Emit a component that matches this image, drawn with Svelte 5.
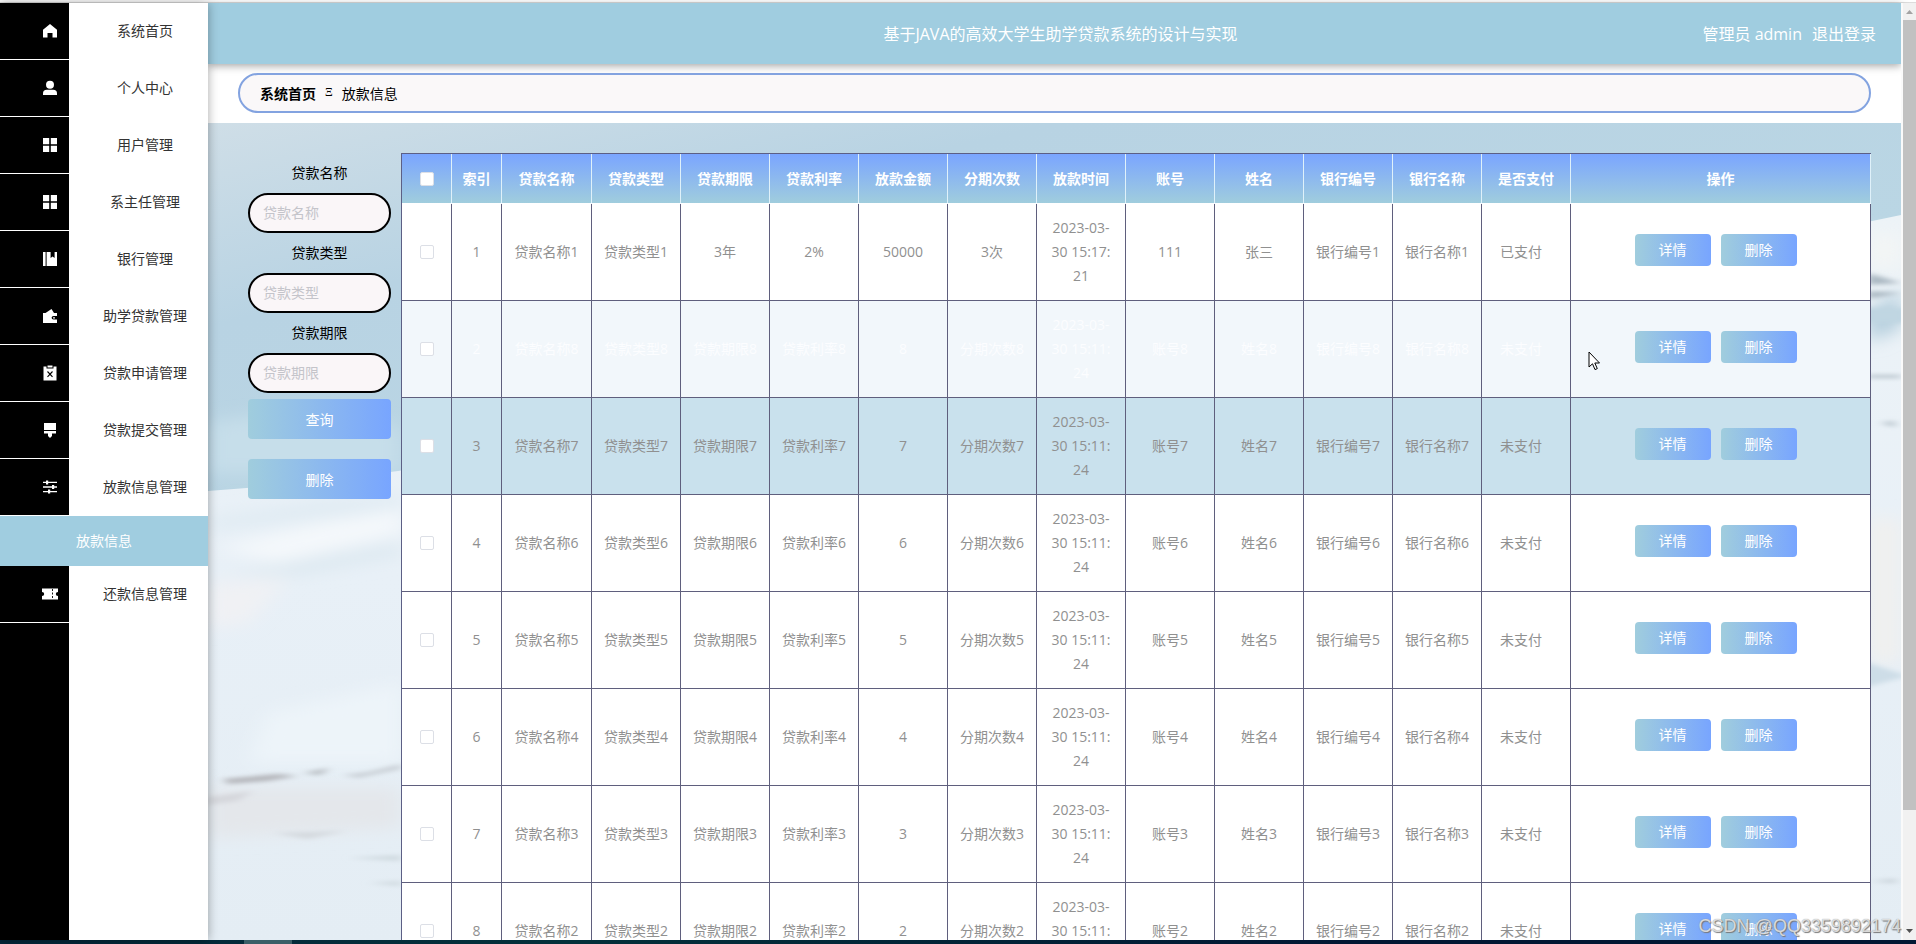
<script>
  const menu = [
    { icon: "home", label: "系统首页" },
    { icon: "user", label: "个人中心" },
    { icon: "grid", label: "用户管理" },
    { icon: "grid", label: "系主任管理" },
    { icon: "book", label: "银行管理" },
    { icon: "wallet", label: "助学贷款管理" },
    { icon: "clipboard", label: "贷款申请管理" },
    { icon: "brush", label: "贷款提交管理" },
    { icon: "sliders", label: "放款信息管理", children: ["放款信息"] },
    { icon: "ticket", label: "还款信息管理" },
  ];

  const columns = [
    "贷款名称",
    "贷款类型",
    "贷款期限",
    "贷款利率",
    "放款金额",
    "分期次数",
    "放款时间",
    "账号",
    "姓名",
    "银行编号",
    "银行名称",
    "是否支付",
  ];

  const makeRow = (n) => [
    `贷款名称${n}`,
    `贷款类型${n}`,
    `贷款期限${n}`,
    `贷款利率${n}`,
    `${n}`,
    `分期次数${n}`,
    "2023-03-\n30 15:11:\n24",
    `账号${n}`,
    `姓名${n}`,
    `银行编号${n}`,
    `银行名称${n}`,
    "未支付",
  ];

  const rows = [
    ["贷款名称1", "贷款类型1", "3年", "2%", "50000", "3次", "2023-03-\n30 15:17:\n21", "111", "张三", "银行编号1", "银行名称1", "已支付"],
    ...[8, 7, 6, 5, 4, 3, 2].map(makeRow),
  ];

  let search = { name: "", type: "", term: "" };
  let checked = rows.map(() => false);
  let hovered = 1;

  $: allChecked = checked.every(Boolean);

  const toggleAll = () => {
    const next = !allChecked;
    checked = checked.map(() => next);
  };

  const reset = () => {
    search = { name: "", type: "", term: "" };
  };
</script>

<div class="page">
  <div class="topline"></div>
  <div class="body">
    <nav class="sidebar">
      {#each menu as item}
        <a class="item" href="#menu">
          <span class="icon">
            <svg viewBox="0 0 16 16" width="16" height="16" fill="#fff">
              {#if item.icon === "home"}
                <path d="M8 1 L15 6.8 V14.5 H10.5 V10 H5.5 V14.5 H1 V6.8 Z" />
              {:else if item.icon === "user"}
                <circle cx="8" cy="4.8" r="4" />
                <path d="M1 15 V13.5 Q1 9.8 4.8 9.8 H11.2 Q15 9.8 15 13.5 V15 Z" />
              {:else if item.icon === "grid"}
                <path d="M1 1h6.2v6.2H1zM8.8 1H15v6.2H8.8zM1 8.8h6.2V15H1zM8.8 8.8H15V15H8.8z" />
              {:else if item.icon === "book"}
                <path d="M1 1h2.6v14H1zM4.6 1h4v6l2-1.6 2 1.6V1H15v14H4.6z" />
              {:else if item.icon === "wallet"}
                <path d="M1 5 H3.5 L9.5 1 L12 5 H15 V8 H11.5 Q9.6 8 9.6 9.8 Q9.6 11.6 11.5 11.6 H15 V15 H1 Z" />
                <circle cx="12" cy="9.8" r="0.9" />
              {:else if item.icon === "clipboard"}
                <path d="M1.5 1.5 H4.5 V3.5 H11.5 V1.5 H14.5 V15.5 H1.5 Z" />
                <path d="M5.5 0.5h5v2h-5z" />
                <path d="M5.5 6.5 L10.5 11.8 M10.5 6.5 L5.5 11.8" stroke="#000" stroke-width="1.1" />
              {:else if item.icon === "brush"}
                <path d="M2 1h12v7H2zM2 9h12v2.5h-4V14L8 16 6 14v-2.5H2z" />
              {:else if item.icon === "sliders"}
                <path d="M1 2.7h14v1.4H1zM1 7.3h14v1.4H1zM1 11.9h14v1.4H1z" />
                <path d="M4 1.4h2.2v4H4zM10 6h2.2v4H10zM6 10.6h2.2v4H6z" />
              {:else}
                <path d="M0 2.5 H16 V6 Q13.8 6 13.8 8 Q13.8 10 16 10 V13.5 H0 V10 Q2.2 10 2.2 8 Q2.2 6 0 6 Z" />
                <path d="M10.5 3v10" stroke="#000" stroke-width="0.9" stroke-dasharray="2 1.5" />
              {/if}
            </svg>
          </span>
          <span class="label">{item.label}</span>
        </a>
        {#each item.children ?? [] as child}
          <a class="subitem" href="#menu">{child}</a>
        {/each}
      {/each}
    </nav>

    <main>
      <header>
        <h1>基于JAVA的高效大学生助学贷款系统的设计与实现</h1>
        <div class="account">
          <span>管理员 admin</span>
          <a href="#logout">退出登录</a>
        </div>
      </header>

      <div class="crumbs">
        <a href="#home">系统首页</a>
        <span class="separator">Ξ</span>
        <span>放款信息</span>
      </div>

      <section class="content">
        <svg class="scene" viewBox="0 0 1693 817" preserveAspectRatio="none" aria-hidden="true">
          <defs>
            <linearGradient id="sky" x1="0" y1="0" x2="0.25" y2="0.5">
              <stop offset="0" stop-color="#cfdee7" />
              <stop offset="0.4" stop-color="#b8d3e3" />
              <stop offset="1" stop-color="#bad6e4" />
            </linearGradient>
            <linearGradient id="snow" x1="0" y1="0" x2="0" y2="1">
              <stop offset="0" stop-color="#edf3f7" />
              <stop offset="0.5" stop-color="#e8f0f7" />
              <stop offset="1" stop-color="#e4edf4" />
            </linearGradient>
            <filter id="soft" x="-20%" y="-50%" width="140%" height="200%">
              <feGaussianBlur stdDeviation="10 8" />
            </filter>
            <filter id="fine" x="-20%" y="-50%" width="140%" height="200%">
              <feGaussianBlur stdDeviation="5 2" />
            </filter>
          </defs>
          <rect width="1693" height="817" fill="url(#sky)" />
          <path d="M0 300 Q100 280 193 305 V350 H0 Z" fill="#c6deea" filter="url(#soft)" />
          <path d="M0 368 L90 361 L190 348 L1640 103 L1693 92 V817 H0 Z" fill="url(#snow)" />
          <g filter="url(#soft)">
            <path d="M0 395 L110 378 L193 372 V388 L60 402 L0 408 Z" fill="#e0ebf3" />
            <path d="M10 425 L110 400 L193 385 V410 L70 440 Z" fill="#f4f8fb" />
            <path d="M20 450 L193 420 V432 L90 452 Z" fill="#dce8f0" />
            <path d="M0 460 L80 455 L40 500 L0 505 Z" fill="#f0f1f4" />
            <path d="M60 590 L193 560 V640 H40 Z" fill="#edf4f9" />
            <path d="M0 665 H193 V705 L0 715 Z" fill="#e4e7eb" />
            <path d="M1660 110 H1693 V145 H1660 Z" fill="#f3f5f5" />
            <path d="M1660 190 L1693 165 V205 L1660 220 Z" fill="#b4cedd" />
            <path d="M1660 395 H1693 V540 H1660 Z" fill="#f0f0ef" />
          </g>
          <g filter="url(#fine)">
            <path d="M1655 185 H1700 V200 H1655 Z" fill="#c0d6e2" />
            <path d="M1655 538 L1700 553 L1655 565 Z" fill="#cddde7" />
            <path d="M15 656 L70 651 L90 653 L60 658 L20 661 Z" fill="#b4b5ba" />
            <path d="M95 650 L122 645 L112 652 Z" fill="#b4b8bd" />
            <path d="M135 652 L160 649 L193 641 V646 L150 655 Z" fill="#c8ced4" />
            <path d="M0 674 L45 668 L30 678 L0 682 Z" fill="#d5d7dc" />
            <path d="M65 710 L138 708 L100 716 Z" fill="#d4d9de" />
            <path d="M140 735 L193 732 V738 Z M160 760 L193 758 V763 Z" fill="#cfd9df" />
            <path d="M1660 150 L1693 160 L1660 162 Z M1660 168 L1693 170 L1660 176 Z" fill="#aab8c2" />
            <path d="M1660 252 H1693 V255 H1660 Z M1672 300 L1686 298 L1688 304 Z" fill="#b3bfc8" />
            <path d="M1663 758 L1688 756 V760 Z" fill="#c3ccd3" />
          </g>
        </svg>

        <form class="search" on:submit|preventDefault>
          <label for="loan-name">贷款名称</label>
          <input id="loan-name" type="text" placeholder="贷款名称" bind:value={search.name} />
          <label for="loan-type">贷款类型</label>
          <input id="loan-type" type="text" placeholder="贷款类型" bind:value={search.type} />
          <label for="loan-term">贷款期限</label>
          <input id="loan-term" type="text" placeholder="贷款期限" bind:value={search.term} />
          <button type="submit" class="query">查询</button>
          <button type="button" on:click={reset}>删除</button>
        </form>

        <table>
          <colgroup>
            <col class="narrow" />
            <col class="narrow" />
            {#each columns as _, i}
              <col class={i === 0 ? "name" : "data"} />
            {/each}
            <col />
          </colgroup>
          <thead>
            <tr>
              <th><input type="checkbox" aria-label="全选" checked={allChecked} on:change={toggleAll} /></th>
              <th>索引</th>
              {#each columns as column}
                <th>{column}</th>
              {/each}
              <th>操作</th>
            </tr>
          </thead>
          <tbody>
            {#each rows as row, i}
              <tr class:hovered={hovered === i} class:striped={i === 2}>
                <td><input type="checkbox" aria-label="选择" bind:checked={checked[i]} /></td>
                <td>{i + 1}</td>
                {#each row as cell, c}
                  <td class:status={c === row.length - 1}>{cell}</td>
                {/each}
                <td>
                  <div class="actions">
                    <button type="button">详情</button>
                    <button type="button">删除</button>
                  </div>
                </td>
              </tr>
            {/each}
          </tbody>
        </table>
      </section>
    </main>

    <div class="scrollbar">
      <svg viewBox="0 0 13 17" width="13" height="17"><path d="M3 11 L6.5 7 L10 11 Z" fill="#a3a3a3" /></svg>
      <div class="thumb"></div>
      <div class="track"></div>
      <svg viewBox="0 0 13 17" width="13" height="17"><path d="M3 6 L6.5 10 L10 6 Z" fill="#505050" /></svg>
    </div>
  </div>
  <div class="taskbar"><span></span></div>

  <svg class="cursor" viewBox="0 0 13 20" width="13" height="20">
    <path d="M1 1 V16 L4.5 12.8 L7 18.6 L9.3 17.6 L6.8 12 H11.5 Z" fill="#fff" stroke="#000" />
  </svg>
  <div class="watermark">CSDN @QQ3359892174</div>
</div>

<style>
  :global(body) {
    margin: 0;
    background: #fff;
  }

  .page {
    position: relative;
    display: flex;
    flex-direction: column;
    height: 100vh;
    overflow: hidden;
    font-family: "Open Sans", "Noto Sans CJK SC", sans-serif;
    font-size: 14px;
    color: #000;
  }

  .page * {
    box-sizing: border-box;
  }

  a {
    color: inherit;
    text-decoration: none;
  }

  .topline {
    flex: none;
    height: 3px;
    border-bottom: 1px solid #dcdcdc;
  }

  .body {
    display: flex;
    flex: 1;
    min-height: 0;
  }

  .sidebar {
    z-index: 1;
    flex: none;
    width: 208px;
    background: linear-gradient(90deg, #000 69px, #fff 69px);
    box-shadow: 0 0 10px rgba(0, 0, 0, 0.35);
  }

  .item {
    display: flex;
    height: 57px;
    color: #333;
  }

  .icon {
    display: flex;
    align-items: center;
    justify-content: flex-end;
    width: 69px;
    padding-right: 11px;
    border-bottom: 1px solid #fff;
  }

  .label {
    flex: 1;
    padding-left: 13px;
    line-height: 56px;
    text-align: center;
  }

  .subitem {
    display: block;
    height: 50px;
    line-height: 50px;
    text-align: center;
    color: #fff;
    background: #a0cde0;
  }

  main {
    display: flex;
    flex: 1;
    flex-direction: column;
    min-width: 0;
  }

  header {
    display: grid;
    flex: none;
    grid-template-columns: 1fr auto 1fr;
    align-items: center;
    height: 61px;
    padding: 0 25px 1px 37px;
    font-size: 16px;
    color: #fff;
    background: #a0cde0;
    box-shadow: 0 2px 8px rgba(0, 0, 0, 0.35);
  }

  h1 {
    grid-column: 2;
    margin: 0;
    font-size: 16px;
    font-weight: 400;
  }

  .account {
    display: flex;
    gap: 10px;
    justify-content: flex-end;
  }

  .crumbs {
    z-index: 1;
    display: flex;
    flex: none;
    gap: 9px;
    align-items: center;
    height: 40px;
    margin: 9px 30px 10px;
    padding: 0 20px 1px;
    border: 2px solid #83a3e0;
    border-radius: 20px;
    background: #faf8f9;
  }

  .crumbs a {
    font-weight: 700;
  }

  .separator {
    font-family: "Liberation Serif", serif;
    font-size: 12px;
  }

  .content {
    position: relative;
    display: flex;
    flex: 1;
    align-items: flex-start;
    min-height: 0;
    padding: 30px 30px 0;
    overflow: hidden;
  }

  .scene {
    position: absolute;
    inset: 0;
    width: 100%;
    height: 100%;
  }

  .search {
    position: relative;
    display: flex;
    flex: none;
    flex-direction: column;
    width: 163px;
    padding: 0 10px;
  }

  .search label {
    line-height: 40px;
    text-align: center;
  }

  .search input {
    width: 100%;
    height: 40px;
    padding: 0 13px 1px;
    font: inherit;
    border: 2px solid #000;
    border-radius: 20px;
    outline: none;
    background: #faf6f8;
  }

  .search input::placeholder {
    color: #c4c4ca;
    opacity: 1;
  }

  button {
    padding: 0;
    font: inherit;
    color: #fff;
    cursor: pointer;
    border: none;
    border-radius: 4px;
    background: linear-gradient(90deg, #a0cddd, #78a5ff);
  }

  .search button {
    height: 40px;
    margin-bottom: 20px;
  }

  .search .query {
    margin-top: 6px;
  }

  table {
    position: relative;
    flex: 1;
    min-width: 0;
    table-layout: fixed;
    border-spacing: 0;
    border: solid #5c5f85;
    border-width: 1px 0 0 1px;
  }

  .narrow {
    width: 50px;
  }

  .name {
    width: 90px;
  }

  .data {
    width: 89px;
  }

  th,
  td {
    padding: 0;
    line-height: 24px;
    text-align: center;
    white-space: pre-line;
  }

  th {
    height: 50px;
    font-weight: 700;
    color: #fff;
    border-right: 1px solid #dff1fa;
    border-bottom: 1px solid #fff;
    background: linear-gradient(#7aa5ff, #a0cddd);
  }

  td {
    height: 97px;
    color: #909090;
    border: solid #5f5f7d;
    border-width: 0 1px 1px 0;
    background: #fff;
  }

  .hovered td {
    color: #fcfdff;
    background: #f2f7fb;
  }

  .striped td {
    background: #c9e1ed;
  }

  .status {
    padding-right: 10px;
  }

  input[type="checkbox"] {
    display: block;
    width: 14px;
    height: 14px;
    margin: 0 auto;
    appearance: none;
    border: 1px solid #dcdfe6;
    border-radius: 2px;
    background: #fff;
  }

  input[type="checkbox"]:checked {
    background: #78a5ff;
  }

  .actions {
    display: flex;
    gap: 10px;
    justify-content: center;
    padding: 0 10px 4px 0;
  }

  .actions button {
    width: 76px;
    height: 32px;
  }

  .scrollbar {
    display: flex;
    flex: none;
    flex-direction: column;
    width: 15px;
    border-left: 2px solid #fafafa;
    background: #f1f1f1;
  }

  .scrollbar svg {
    flex: none;
  }

  .thumb {
    flex: 7;
    background: #c1c1c1;
  }

  .track {
    flex: 1;
  }

  .taskbar {
    flex: none;
    height: 4px;
    padding-left: 244px;
    background: linear-gradient(90deg, #04273a, #03303a 30%, #021733 70%);
  }

  .taskbar span {
    display: block;
    width: 48px;
    height: 4px;
    background: #3b5f68;
  }

  .cursor {
    position: absolute;
    top: 351px;
    left: 1588px;
    z-index: 2;
  }

  .watermark {
    position: absolute;
    right: 15px;
    bottom: 7px;
    z-index: 2;
    font-family: "Liberation Sans", sans-serif;
    font-size: 18px;
    line-height: 22px;
    color: rgba(255, 255, 255, 0.7);
    text-shadow: 1px 1px 1px #777, 0 0 1px #888;
  }
</style>
